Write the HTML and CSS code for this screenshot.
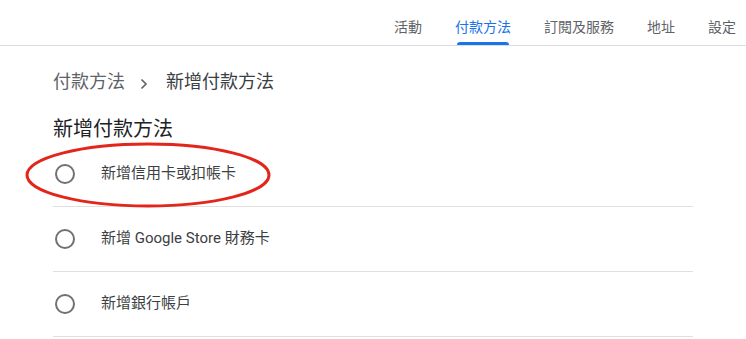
FILE: index.html
```html
<!DOCTYPE html>
<html lang="zh-Hant">
<head>
<meta charset="utf-8">
<title>新增付款方法</title>
<link rel="stylesheet" href="styles.css">
</head>
<body>
<header class="topbar">
  <nav class="tabs">
    <a class="tab"><span class="tab-label">活動</span><span class="tab-ind"></span></a>
    <a class="tab active"><span class="tab-label">付款方法</span><span class="tab-ind"></span></a>
    <a class="tab"><span class="tab-label">訂閱及服務</span><span class="tab-ind"></span></a>
    <a class="tab"><span class="tab-label">地址</span><span class="tab-ind"></span></a>
    <a class="tab"><span class="tab-label">設定</span><span class="tab-ind"></span></a>
  </nav>
</header>
<main class="content">
  <div class="crumbs">
    <span class="crumb-link">付款方法</span>
    <svg class="chev" width="8" height="12" viewBox="0 0 8 12"><path d="M1.5 1.5 L6 6 L1.5 10.5" fill="none" stroke="#5f6368" stroke-width="1.6"/></svg>
    <span class="crumb-current">新增付款方法</span>
  </div>
  <h1 class="title">新增付款方法</h1>
  <ul class="options">
    <li class="option"><span class="radio"></span><span class="opt-label">新增信用卡或扣帳卡</span></li>
    <li class="option"><span class="radio"></span><span class="opt-label">新增 Google Store 財務卡</span></li>
    <li class="option"><span class="radio"></span><span class="opt-label">新增銀行帳戶</span></li>
  </ul>
</main>
<svg class="mark" width="246" height="66" viewBox="0 0 246 66"><ellipse cx="123" cy="33" rx="121" ry="31" fill="none" stroke="#e3261c" stroke-width="3"/></svg>
</body>
</html>
```
FILE: styles.css
```css
html, body {
  margin: 0;
  padding: 0;
  background: #ffffff;
}
body {
  font-family: Roboto, "Noto Sans CJK TC", sans-serif;
  color: #202124;
  width: 746px;
  height: 339px;
  overflow: hidden;
  position: relative;
}
.topbar {
  height: 45px;
  border-bottom: 1px solid #dadce0;
}
.tabs {
  display: flex;
  justify-content: flex-end;
  gap: 33px;
  padding-right: 10px;
  height: 45px;
}
.tab {
  display: flex;
  flex-direction: column;
  justify-content: space-between;
  height: 45px;
  box-sizing: border-box;
  padding-top: 17px;
  font-size: 14px;
  line-height: 20px;
  color: #5f6368;
  cursor: pointer;
}
.tab-ind {
  height: 3px;
  margin: 0 2px;
  border-radius: 3px 3px 0 0;
}
.tab.active .tab-label {
  color: #1a73e8;
}
.tab.active .tab-ind {
  background: #1a73e8;
}
.content {
  padding-left: 53px;
  width: 640px;
}
.crumbs {
  display: flex;
  align-items: center;
  margin-top: 24px;
  height: 24px;
  font-size: 18px;
  line-height: 24px;
}
.crumb-link {
  color: #5f6368;
}
.chev {
  margin: 4px 18px 0 15px;
}
.crumb-current {
  color: #3c4043;
}
.title {
  margin: 22px 0 0;
  font-size: 20px;
  font-weight: 400;
  line-height: 26px;
  color: #202124;
}
.options {
  list-style: none;
  margin: 0;
  padding: 0;
}
.option {
  display: flex;
  align-items: center;
  height: 64px;
  border-bottom: 1px solid #e0e0e0;
  padding-left: 2px;
}
.radio {
  width: 20px;
  height: 20px;
  box-sizing: border-box;
  border: 2px solid #6f7175;
  border-radius: 50%;
  margin-right: 26px;
  flex: none;
}
.opt-label {
  font-size: 15px;
  line-height: 20px;
  margin-bottom: 2px;
  color: #3c4043;
}
.mark {
  position: absolute;
  left: 25px;
  top: 142px;
}
```
